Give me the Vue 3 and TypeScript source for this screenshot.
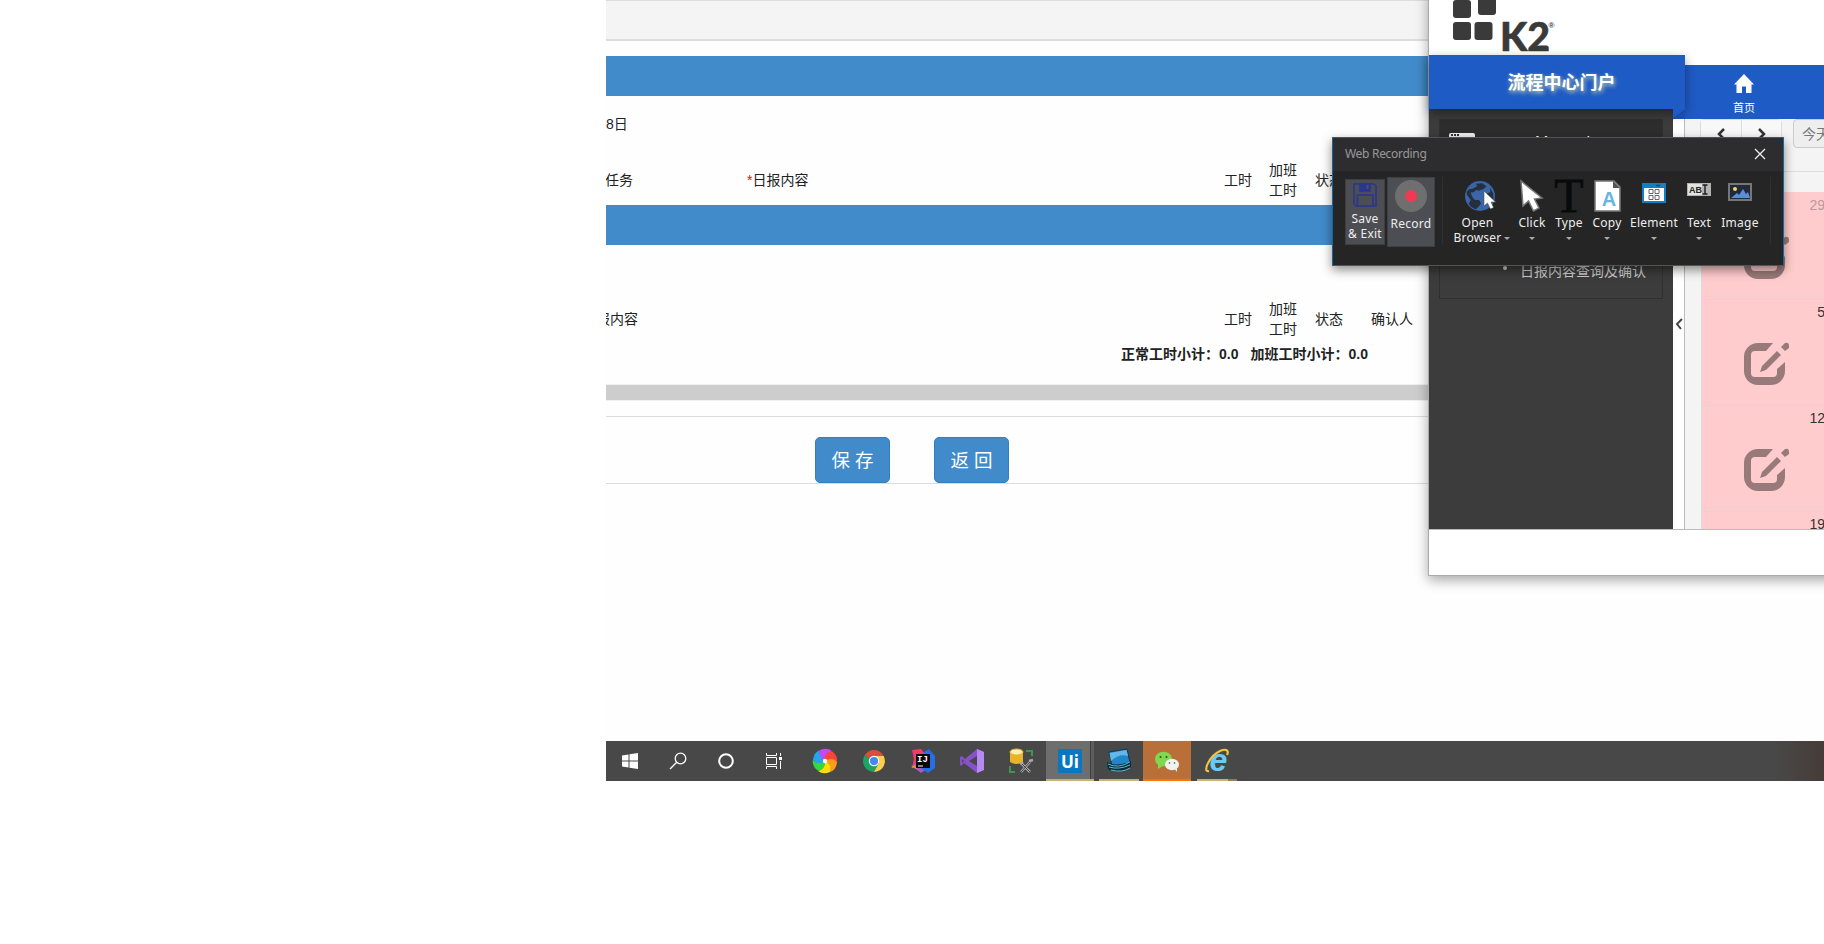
<script setup lang="ts">
interface Tool {
  id: string
  label: string
  width: number
}

const tools: Tool[] = [
  { id: 'click', label: 'Click', width: 36 },
  { id: 'type', label: 'Type', width: 38 },
  { id: 'copy', label: 'Copy', width: 38 },
  { id: 'element', label: 'Element', width: 56 },
  { id: 'text', label: 'Text', width: 34 },
  { id: 'image', label: 'Image', width: 48 },
]

const systemItems = ['start', 'search', 'cortana', 'tasks']
const apps = ['wheel', 'chrome', 'idea', 'vs', 'db', 'uipath', 'notes', 'wechat', 'ie']
const days = ['29', '5', '12', '19']
const petals = [0, 60, 120, 180, 240, 300]
const petalColors = ['#c04bf0', '#ff4338', '#ff9b1a', '#ffdc05', '#35d83a', '#25a5ee']
</script>

<template>
  <div class="screen">
    <main class="report">
      <div class="strip"></div>
      <div class="section first"></div>
      <div class="date">8日</div>
      <div class="columns top">
        <span class="clip">任务</span>
        <span><b class="star">*</b>日报内容</span>
        <span>工时</span>
        <span>加班<br />工时</span>
        <span>状态</span>
        <span></span>
      </div>
      <div class="section"></div>
      <div class="columns bottom">
        <span class="cut">报内容</span>
        <span></span>
        <span>工时</span>
        <span>加班<br />工时</span>
        <span>状态</span>
        <span>确认人</span>
      </div>
      <div class="totals"><span>正常工时小计：0.0</span><span>加班工时小计：0.0</span></div>
      <div class="scrollbar"></div>
      <div class="actions">
        <button>保 存</button>
        <button>返 回</button>
      </div>
    </main>

    <section class="portal">
      <header class="brand">
        <svg width="150" height="55" viewBox="0 0 150 55">
          <g fill="#3a3a3a">
            <rect x="24" y="0" width="18" height="18" rx="3" />
            <rect x="49" y="-4" width="18" height="19" rx="3" />
            <rect x="24" y="22" width="18" height="18" rx="3" />
            <rect x="45.500" y="22" width="18" height="18" rx="3" />
          </g>
          <text x="71" y="51" class="k2" textLength="50" lengthAdjust="spacingAndGlyphs">K2</text>
          <text x="119.500" y="28" class="reg">®</text>
        </svg>
      </header>
      <div class="portal-body">
        <div class="left">
          <div class="title">流程中心门户</div>
          <div class="under">
            <aside>
              <div class="menu">
                <div class="menu-head">
                  <svg width="26" height="20"><rect x="0" y="0" width="26" height="16" rx="2" fill="#eee" /><path d="M2 2h9M2 5h9" stroke="#333" stroke-width="2" stroke-dasharray="2 1" /></svg>
                  <span>My work</span>
                </div>
                <ul><li>日报内容查询及确认</li></ul>
              </div>
            </aside>
            <div class="handle">
              <svg width="8" height="12"><path d="M7 1L2 6l4 5" fill="none" stroke="#444" stroke-width="2" /></svg>
            </div>
          </div>
          <svg class="fold" width="12" height="10"><path d="M0 0H12V10H0Z" fill="#1b4fae" /><path d="M0 0H12V1L0 10Z" fill="#1f5bc4" /><path d="M12 1L0 10" fill="none" stroke="#17479c" /></svg>
        </div>
        <div class="right">
          <nav>
            <svg width="20" height="19" viewBox="0 0 20 19"><path d="M10 0L20 10.500H17.500V19H12V12.500H8V19H2.500V10.500H0Z" fill="#fff" /></svg>
            <span>首页</span>
          </nav>
          <div class="cal-tools">
            <div class="pair">
              <i><svg width="8" height="14"><path d="M7 2L2 7l5 5" fill="none" stroke="#333" stroke-width="2.500" /></svg></i>
              <i><svg width="8" height="14"><path d="M1 2l5 5-5 5" fill="none" stroke="#333" stroke-width="2.500" /></svg></i>
            </div>
            <div class="today">今天</div>
          </div>
          <div class="days">
            <div v-for="(d, i) in days" :key="d" class="day" :class="{ old: i === 0 }">
              <span>{{ d }}</span>
              <svg width="46" height="44" viewBox="0 0 46 44">
                <path d="M30 1H15A14 14 0 0 0 1 15V29A14 14 0 0 0 15 43H28A14 14 0 0 0 42 29V20L34 27V31Q34 35 30 35H12Q8 35 8 31V13Q8 9 12 9H23Z" />
                <path d="M34 9L38 13L23 28L17 30L19 24Z" />
                <path d="M38 5L42 1Q46 0 46 4V6L42 9Z" />
              </svg>
            </div>
          </div>
        </div>
      </div>
      <footer></footer>
    </section>

    <section class="recorder">
      <div class="bar">
        <span>Web Recording</span>
        <svg width="12" height="12"><path d="M1 1l10 10M11 1L1 11" stroke="#eee" stroke-width="1.300" /></svg>
      </div>
      <div class="tools">
        <div class="key save">
          <svg width="24" height="24" viewBox="0 0 24 24" fill="none" stroke="#2a3690" stroke-width="1.600">
            <path d="M1 1H21L23 3V23H3L1 21ZM4.500 23V12H20V23" />
            <path d="M7 1H17V8H7Z" fill="#2a3690" /><path d="M14.500 2V6" stroke="#505058" stroke-width="2" />
          </svg>
          <span>Save<br />&amp; Exit</span>
        </div>
        <div class="key record">
          <svg width="32" height="32"><circle cx="16" cy="16" r="16" fill="#6f6f70" /><circle cx="16" cy="16" r="6" fill="#f03a52" /></svg>
          <span>Record</span>
        </div>
        <div class="rule"></div>
        <div class="tool open">
          <svg width="34" height="32" viewBox="0 0 34 32">
            <circle cx="17" cy="16" r="15" fill="#3a65a8" />
            <path d="M16 3L21 5L19 8L15 11L12 11L10 14L7 15L10 19L13 21L17 20L20 23L18 27L16 30Q10 29 8 26L9 22L4 18L3 15L5 12L9 10L12 7L10 5ZM25 6L29 10L31 16L26 15L23 12L26 10Z" fill="#26303c" transform="rotate(14 17 16)" />
            <path d="M21 11V26L24.500 23L27.500 29L30.500 27.500L28 22H32.500Z" fill="#fff" stroke="#555" stroke-width=".6" />
          </svg>
          <span>Open<br />Browser</span>
          <i class="caret side"></i>
        </div>
        <div v-for="t in tools" :key="t.id" class="tool" :style="{ width: t.width + 'px' }">
          <svg width="34" height="32" viewBox="0 0 34 32">
            <path v-if="t.id === 'click'" d="M6 1L8 26L13.500 21L18.500 31L24 28L19.500 19L27 18Z" fill="#fff" stroke="#777" stroke-width="1.500" />
            <text v-else-if="t.id === 'type'" x="17" y="32" class="tee">T</text>
            <g v-else-if="t.id === 'copy'">
              <path d="M5 1H24L30 7V31H5Z" fill="#fff" stroke="#777" stroke-width="1.500" />
              <path d="M23 1V8H30Z" fill="#555" />
              <text x="19" y="26" class="letter">A</text>
            </g>
            <g v-else-if="t.id === 'element'">
              <path d="M5 3H29V23H5Z" fill="#1180c3" /><path d="M7 8H27V21H7Z" fill="#fff" />
              <path d="M12 9.500h4v4h-4zM18 9.500h4v4h-4zM12 15.500h4v4h-4zM18 15.500h4v4h-4z" fill="#fff" stroke="#666" />
              <path d="M19 5.500h4" stroke="#17436c" stroke-width="1.500" /><path d="M25 5.500h2" stroke="#d44" stroke-width="1.500" />
            </g>
            <g v-else-if="t.id === 'text'">
              <path d="M5 3H29V16H5Z" fill="#b4b4b0" /><path d="M6 4H20V15H6Z" fill="#e2e2e0" />
              <text x="7" y="12.500" class="abi">AB</text>
              <path d="M20.500 5H25.500M23 5V14M20.500 14H25.500" stroke="#222" stroke-width="1.500" />
            </g>
            <g v-else>
              <path d="M6 4H28V20H6Z" fill="#202a3b" stroke="#777" stroke-width="2" />
              <path d="M8 18Q12 15 14 13L16 15L20 9L23 14L25 12L27 18Z" fill="#5b8fd5" /><circle cx="12" cy="9" r="2" fill="#f5d766" />
            </g>
          </svg>
          <span>{{ t.label }}</span>
          <i class="caret"></i>
        </div>
        <div class="rule end"></div>
      </div>
    </section>

    <footer class="taskbar">
      <div v-for="s in systemItems" :key="s" class="sys">
        <svg width="18" height="18" viewBox="0 0 18 18" fill="none" stroke="#fff">
          <path v-if="s === 'start'" d="M1 3.500L7.500 2.500V8.500H1ZM8.500 2.300L17 1V8.500H8.500ZM1 9.500H7.500V15.500L1 14.500ZM8.500 9.500H17V17L8.500 15.700Z" fill="#fff" stroke="none" />
          <g v-else-if="s === 'search'"><circle cx="11.500" cy="6.500" r="5.300" stroke-width="1.300" /><path d="M7.700 10.300L1 17" stroke-width="1.400" /></g>
          <circle v-else-if="s === 'cortana'" cx="9" cy="9" r="6.800" stroke-width="2" />
          <g v-else>
            <path d="M1.500 1V3.500H11.500V1M1.500 17V14.500H11.500V17M1.500 5.500H11.500V12.500H1.500ZM15.500 1V4M15.500 9V17" />
            <path d="M14 5H17V8H14Z" fill="#fff" stroke="none" />
          </g>
        </svg>
      </div>
      <div class="apps">
        <div v-for="a in apps" :key="a" class="app" :class="a">
          <svg width="26" height="26" viewBox="0 0 26 26">
            <g v-if="a === 'wheel'">
              <path v-for="(r, i) in petals" :key="r" d="M13 13C8 11 6 6 8 2Q15-1 20 3Q13 5 13 13Z" :fill="petalColors[i]" :transform="`rotate(${r} 13 13)`" />
              <circle cx="13" cy="13" r="2.200" fill="#fff" />
            </g>
            <g v-else-if="a === 'chrome'">
              <path d="M13 13L3.500 7.500A11 11 0 0 1 22.500 7.500Z" fill="#dd4b3e" />
              <path d="M13 13L3.500 7.500A11 11 0 0 0 13 24L18 16Z" fill="#1da362" />
              <path d="M13 8H22.700A11 11 0 0 1 13 24L18 15Z" fill="#fdd04c" />
              <circle cx="13" cy="13" r="5.200" fill="#fff" /><circle cx="13" cy="13" r="4.100" fill="#4688f1" />
            </g>
            <g v-else-if="a === 'idea'">
              <path d="M2 2L11 1L15 6L10 17L2 20L4 11Z" fill="#f23b68" /><path d="M2 18L8 13L18 20L11 25Z" fill="#ae55c8" />
              <path d="M14 4L19 1L25 8V20L18 25L9 19Z" fill="#246fe5" /><path d="M1 19L5 17L7 21Z" fill="#f88b32" />
              <path d="M6 6H20V20H6Z" fill="#080808" /><text x="7" y="14" class="ij">IJ</text><path d="M8 18H13" stroke="#fff" />
            </g>
            <g v-else-if="a === 'vs'">
              <path d="M18 1L25 4V22L18 25L5 15L2 18L1 17V9L3 8L6 11ZM18 8L10 13L18 18Z" fill="#8751c9" /><path d="M3 11V15L5 13Z" fill="#484848" /><path d="M18 1L25 4V22L18 25Z" fill="#b78af2" />
            </g>
            <g v-else-if="a === 'db'">
              <path d="M2 4V14Q8 18 15 14V4Z" fill="#eab427" /><ellipse cx="8.500" cy="4" rx="6.500" ry="3" fill="#fff0b0" stroke="#eab427" />
              <path d="M18 3H24V8M2 18V24H7" fill="none" stroke="#3a9849" stroke-width="2" />
              <path d="M13 24L22 14M14 16L22 24M21 13l4-1M12 16l3-2" stroke="#aaa" stroke-width="2.500" /><path d="M13 24L22 14M14 16L22 24" stroke="#444" />
            </g>
            <g v-else-if="a === 'uipath'">
              <path d="M1 1H25V25H1Z" fill="#0877c1" /><text x="4" y="20" class="ui">Ui</text>
            </g>
            <g v-else-if="a === 'notes'">
              <path d="M3 4L21 1L24 15L6 18Z" fill="#2186c9" stroke="#16364a" /><path d="M3.500 5L20.500 2L22 8Q13 5 5 13Z" fill="#62b9e8" />
              <path d="M1 14Q12 20 25 13V19Q13 27 2 21Z" fill="#0d2a3a" /><path d="M2 16Q12 21 24 14M3 19Q13 22 24 17M5 22Q16 25 24 20" stroke="#59bfd4" fill="none" />
            </g>
            <g v-else-if="a === 'wechat'">
              <ellipse cx="9.500" cy="11" rx="8.500" ry="7.300" fill="#80d84e" /><path d="M4 16L4 21L9 18Z" fill="#80d84e" />
              <ellipse cx="18" cy="16.500" rx="7" ry="5.800" fill="#f1f1ef" /><path d="M20 20L23 24V19Z" fill="#f1f1ef" />
              <g fill="#285220"><circle cx="6.500" cy="9" r="1" /><circle cx="12.500" cy="9" r="1" /><circle cx="15.500" cy="15" r=".8" /><circle cx="20.500" cy="15" r=".8" /></g>
            </g>
            <g v-else>
              <text x="14.500" y="22.500" class="explorer">e</text>
              <path d="M5 23C-2 25 5 8 16 3C23 0 25 3 23 7" fill="none" stroke="#f3c43d" stroke-width="2.200" />
            </g>
          </svg>
        </div>
      </div>
    </footer>
  </div>
</template>

<style>
html, body { margin: 0; background: #fff; }
</style>

<style scoped>
* { box-sizing: border-box; }
.screen { position: relative; width: 1824px; height: 944px; overflow: hidden; background: #fff; font: 14px/20px "Liberation Sans", "Noto Sans CJK SC", sans-serif; color: #222; }
svg { display: block; overflow: visible; flex: none; }
.report { margin-left: 606px; height: 741px; background: #fefefe; overflow: hidden; }
.strip { height: 41px; background: #f4f4f4; border-top: 1px solid #ddd; border-bottom: 2px solid #ddd; }
.section { height: 40px; background: #428bca; }
.first { margin-top: 15px; }
.date { height: 56px; line-height: 56px; }
.columns { display: grid; grid-template-columns: 141px 477px 45px 46px 56px 1fr; align-items: center; }
.columns span { white-space: nowrap; }
.top { height: 53px; padding-top: 3px; }
.bottom { height: 40px; margin-top: 54px; }
.clip { margin-left: -1px; }
.cut { margin-left: -10px; }
.star { color: red; font-weight: 400; }
.totals { display: flex; gap: 12px; height: 30px; line-height: 30px; padding-left: 515px; font-weight: 700; }
.scrollbar { height: 17px; margin-top: 15px; background: #cdcdcd; border: 1px solid #efefef; border-width: 1px 0; }
.actions { display: flex; gap: 44px; height: 68px; margin-top: 15px; padding: 20px 0 0 209px; border-top: 1px solid #ddd; border-bottom: 1px solid #ddd; }
.actions button { width: 75px; height: 46px; padding: 0; border: 1px solid #357ebd; border-radius: 5px; background: #428bca; color: #fff; font: 18.500px/45px "Liberation Sans", "Noto Sans CJK SC", sans-serif; }

.portal { position: absolute; left: 1428px; top: -10px; width: 420px; height: 586px; background: #fff; border: 1px solid #aaa; box-shadow: 0 4px 12px rgba(0, 0, 0, .35); }
.brand { display: flex; height: 64px; padding-top: 9px; }
.portal-body { display: flex; height: 475px; border-bottom: 1px solid #bbb; }
.left { position: relative; width: 256px; height: 474px; }
.title { position: relative; z-index: 2; height: 54px; padding-left: 9px; background: #1f5bc4; color: #fff; font-size: 18px; font-weight: 700; line-height: 57px; text-align: center; text-shadow: 1px 2px 4px #cdd9b0; box-shadow: 0 4px 10px rgba(0, 0, 0, .4); }
.fold { position: absolute; z-index: 3; left: 244px; top: 54px; }
.under { display: flex; height: 420px; }
aside { width: 244px; padding: 10px; background: #3c3c3c; }
.menu { height: 180px; border: 1px solid #303030; }
.menu-head { display: flex; gap: 60px; height: 54px; padding: 13px 9px; background: #2d2d2d; color: #fff; font-size: 16px; }
.menu ul { margin: 0; padding: 87px 0 0 80px; color: #ccc; list-style: none; }
.menu li { white-space: nowrap; }
.menu li::before { content: ""; float: left; width: 4px; height: 4px; margin: 5px 0 0 -17px; border-radius: 50%; background: #ccc; }
.handle { display: flex; align-items: center; width: 12px; padding: 9px 0 0 2px; border-right: 1px solid #bbb; background: #fff; }
.right { flex: 1; margin-top: 10px; height: 464px; background: #f4f4f4; overflow: hidden; }
nav { display: flex; flex-direction: column; align-items: center; gap: 5px; height: 54px; padding-top: 9px; background: #1f5bc4; color: #fff; font-size: 11px; width: 118px; box-shadow: 60px 0 #1f5bc4; }
.cal-tools { display: flex; gap: 11px; height: 53px; padding-left: 15px; border-bottom: 1px solid #ddd; }
.pair { display: flex; height: 29px; border: 1px solid #ddd; border-radius: 4px; }
.pair i { display: flex; align-items: center; justify-content: center; width: 40px; background: #f8f8f8; }
.pair i + i { border-left: 1px solid #ddd; }
.today { width: 60px; height: 29px; padding-left: 8px; border: 1px solid #ccc; border-radius: 4px; background: #eee; color: #777; line-height: 28px; }
.days { margin: 20px 0 0 16px; border-left: 1px solid #ddd; }
.day { display: flex; flex-direction: column; height: 106px; padding: 2px 0 0 41px; background: #ffcccd; border-bottom: 1px solid #e0d4d2; color: #333; }
.day span { width: 82px; text-align: right; font-size: 14px; }
.day svg { margin-top: 20px; fill: #997a7a; }
.day.old { height: 108px; padding-top: 3px; }
.old span { color: #b99; }
.day.old svg { margin-top: 21px; }

.recorder { position: absolute; z-index: 5; left: 1332px; top: 137px; width: 452px; height: 129px; background: #252526; border: 1px solid #17659f; box-shadow: 0 4px 10px rgba(0, 0, 0, .45); color: #eee; font: 12px/15px "Noto Sans", sans-serif; letter-spacing: .25px; }
.bar { display: flex; justify-content: space-between; align-items: center; height: 33px; padding: 0 17px 2px 12px; background: #2d2d30; color: #999; letter-spacing: -.3px; }
.tools { display: flex; padding-top: 6px; }
.key { display: flex; flex-direction: column; align-items: center; border: 1px solid #3f3f43; background: #4d4d54; text-align: center; white-space: nowrap; }
.save { width: 40px; height: 66px; margin: 2px 2px 0 12px; padding-top: 3px; }
.save span { margin-top: 4px; }
.record { width: 48px; height: 70px; padding-top: 2px; }
.record span { margin-top: 4px; }
.rule { width: 1px; height: 67px; margin-left: 7px; background: #303033; }
.tool { position: relative; display: flex; flex-direction: column; align-items: center; height: 72px; padding-top: 3px; text-align: center; white-space: nowrap; }
.tool svg { margin-left: -1px; }
.tool span { margin-top: 3px; }
.open { width: 67px; margin-left: 4px; }
.open span { margin-left: -6px; }
.open span::first-line { text-indent: 4px; }
.caret { display: block; margin-top: 7px; border: 3px solid transparent; border-top-color: #aaa; border-bottom: 0; }
.side { position: absolute; right: 4px; top: 53px; }
.end { margin-left: 6px; }
.abi { font: 700 9px "Liberation Sans", sans-serif; fill: #222; letter-spacing: 0; }
.tee { font: 48px/32px "Liberation Serif", serif; fill: #090a0a; stroke: #090a0a; stroke-width: .8px; text-anchor: middle; letter-spacing: 0; }
.letter { font: 700 20px "Liberation Sans", sans-serif; fill: #6ab4e0; text-anchor: middle; letter-spacing: 0; }
.explorer { font: italic 700 32px "Liberation Sans", sans-serif; fill: #69cbf5; text-anchor: middle; }
.ij { font: 700 9px "Liberation Mono", monospace; fill: #fff; }
.ui { font: 700 17px "Open Sans", sans-serif; fill: #fff; }
.k2 { font: 900 40px Lato, sans-serif; fill: #3a3a3a; stroke: #3a3a3a; stroke-width: .6px; }
.reg { font: 700 8px "Liberation Sans", sans-serif; fill: #3a3a3a; }

.taskbar { display: flex; margin-left: 606px; height: 40px; background: linear-gradient(90deg, #484848 0 96%, #463c38); }
.sys { display: flex; align-items: center; justify-content: center; width: 48px; height: 40px; }
.apps { display: flex; margin-left: 2px; }
.app { display: flex; align-items: center; justify-content: center; width: 49px; height: 40px; }
.uipath { background: linear-gradient(#c8b273, #c8b273) 1px 100% / 48px 2px no-repeat, linear-gradient(90deg, transparent 1px, #6e6e6e 1px 45px, #3f3f3f 45px 46px, #5d5d5d 46px); }
.notes { background: linear-gradient(#c8b273, #c8b273) 5px 100% / 40px 2px no-repeat; }
.wechat { width: 48px; margin-right: 1px; background: linear-gradient(#ff7300, #ff7300) 0 100% / 100% 2px no-repeat, #b87038; }
.ie { background: linear-gradient(90deg, #c8b273 31px, #8f7f55 31px) 5px 100% / 40px 2px no-repeat; }
</style>
